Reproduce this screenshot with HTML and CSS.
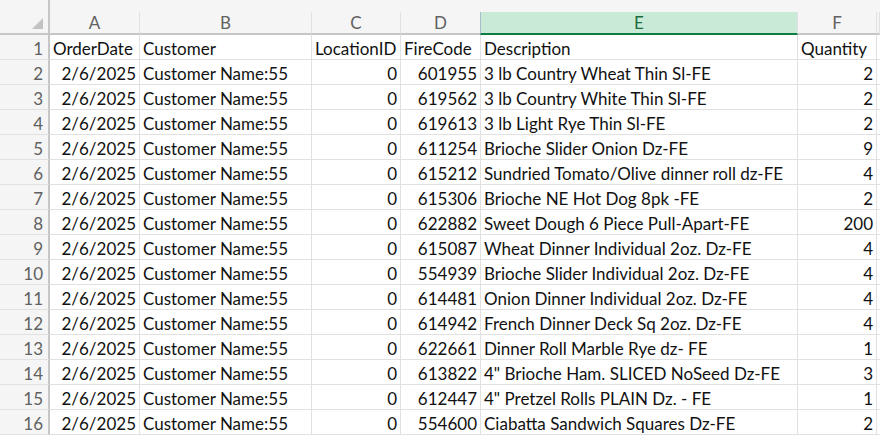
FILE: index.html
```html
<!DOCTYPE html>
<html lang="en">
<head>
    <meta charset="UTF-8">
    <title>Orders</title>
    <link rel="stylesheet" href="styles.css">
</head>
<body>
    <div class="sheet">
        <!-- Column headers -->
        <div class="row head-row">
            <div class="corner"><span class="corner-mark"></span></div>
            <div class="col-head">A</div>
            <div class="col-head">B</div>
            <div class="col-head">C</div>
            <div class="col-head">D</div>
            <div class="col-head selected">E</div>
            <div class="col-head">F</div>
            <div class="col-head"></div>
        </div>

        <div class="row">
            <div class="row-head">1</div>
            <div class="cell">OrderDate</div>
            <div class="cell">Customer</div>
            <div class="cell">LocationID</div>
            <div class="cell">FireCode</div>
            <div class="cell">Description</div>
            <div class="cell">Quantity</div>
            <div class="cell"></div>
        </div>
    </div>

    <script>
        const orders = [
            ["601955", "3 lb Country Wheat Thin Sl-FE", 2],
            ["619562", "3 lb Country White Thin Sl-FE", 2],
            ["619613", "3 lb Light Rye Thin Sl-FE", 2],
            ["611254", "Brioche Slider Onion Dz-FE", 9],
            ["615212", "Sundried Tomato/Olive dinner roll dz-FE", 4],
            ["615306", "Brioche NE Hot Dog 8pk -FE", 2],
            ["622882", "Sweet Dough 6 Piece Pull-Apart-FE", 200],
            ["615087", "Wheat Dinner Individual 2oz. Dz-FE", 4],
            ["554939", "Brioche Slider Individual 2oz. Dz-FE", 4],
            ["614481", "Onion Dinner Individual 2oz. Dz-FE", 4],
            ["614942", "French Dinner Deck Sq 2oz. Dz-FE", 4],
            ["622661", "Dinner Roll Marble Rye dz- FE", 1],
            ["613822", "4\" Brioche Ham. SLICED NoSeed Dz-FE", 3],
            ["612447", "4\" Pretzel Rolls PLAIN Dz. - FE", 1],
            ["554600", "Ciabatta Sandwich Squares Dz-FE", 2]
        ];

        const sheet = document.querySelector('.sheet');

        orders.forEach((order, index) => {
            const row = document.createElement('div');
            row.className = 'row';
            row.innerHTML = `
                <div class="row-head">${index + 2}</div>
                <div class="cell num">2/6/2025</div>
                <div class="cell">Customer Name:55</div>
                <div class="cell num">0</div>
                <div class="cell num">${order[0]}</div>
                <div class="cell">${order[1]}</div>
                <div class="cell num">${order[2]}</div>
                <div class="cell"></div>
            `;
            sheet.appendChild(row);
        });
    </script>
</body>
</html>
```

FILE: styles.css
```css
/* Page */
body {
    margin: 0;
    background-color: #ffffff;
    font-family: "Lato", "Liberation Sans", sans-serif;
    color: #000000;
    overflow: hidden;
}

/* Grid rows */
.row {
    display: grid;
    grid-template-columns: 50px 90px 172px 89px 80px 317px 79px 1fr;
    height: 25px;
}

.cell,
.row-head,
.col-head,
.corner {
    box-sizing: border-box;
    white-space: nowrap;
    overflow: hidden;
}

/* Data cells */
.cell {
    border-right: 1px solid #e1e1e1;
    border-bottom: 1px solid #e1e1e1;
    padding: 3px 3px 0;
    font-size: 17px;
    line-height: 21px;
    color: #111111;
}

.cell.num {
    text-align: right;
}

/* Row numbers */
.row-head {
    background-color: #f5f5f5;
    border-right: 2px solid #c6c6c6;
    border-bottom: 1px solid #e1e1e1;
    color: #616161;
    font-size: 17px;
    line-height: 21px;
    text-align: right;
    padding: 3px 5px 0 0;
}

/* Column header strip */
.head-row {
    height: 35px;
    background-color: #f5f5f5;
}

.corner {
    position: relative;
    border-right: 2px solid #c6c6c6;
    border-bottom: 2px solid #c6c6c6;
}

.corner-mark {
    position: absolute;
    right: 5px;
    bottom: 4px;
    width: 0;
    height: 0;
    border-left: 11px solid transparent;
    border-bottom: 11px solid #c2c2c2;
}

.col-head {
    margin-top: 12px;
    border-right: 1px solid #e1e1e1;
    border-bottom: 2px solid #c6c6c6;
    color: #616161;
    font-size: 17px;
    line-height: 22px;
    text-align: center;
}

.col-head.selected {
    background-color: #caead8;
    border-left: 1px solid #a9bccb;
    margin-left: -1px;
    border-bottom-color: #107c41;
    color: #1c6b3c;
}
```
